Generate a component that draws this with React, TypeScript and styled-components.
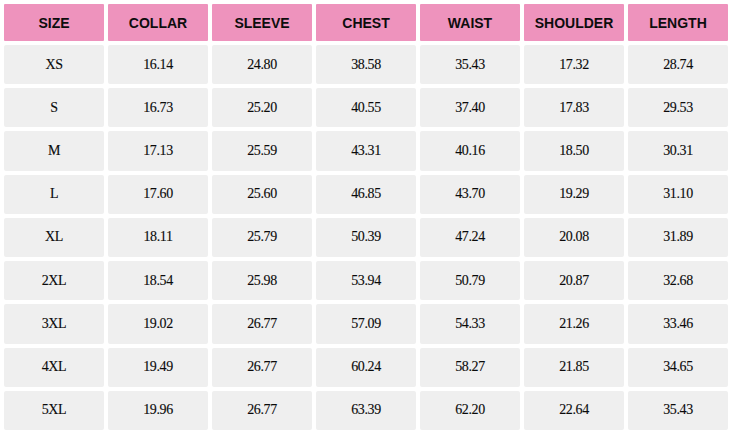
import styled, { createGlobalStyle } from "styled-components";

const GlobalStyle = createGlobalStyle`
  html, body {
    margin: 0;
    padding: 0;
    background: #ffffff;
  }
`;

const Page = styled.div`
  width: 737px;
  height: 441px;
  padding: 4px 0 0 4px;
  box-sizing: border-box;
  background: #ffffff;
`;

const Table = styled.div`
  display: grid;
  grid-template-columns: repeat(7, 100px);
  grid-template-rows: 37px repeat(9, 1fr);
  gap: 4px;
  width: 724px;
  height: 426px;
`;

const HeadCell = styled.div`
  display: flex;
  align-items: center;
  justify-content: center;
  background-color: #ee93bd;
  color: #0d0d0d;
  font-family: "Liberation Sans", Arial, sans-serif;
  font-weight: 700;
  font-size: 14px;
  border-radius: 1px;
`;

const Cell = styled.div`
  display: flex;
  align-items: center;
  justify-content: center;
  background-color: #efefef;
  color: #0a0a0a;
  font-family: "Liberation Serif", "Times New Roman", serif;
  font-size: 14px;
  letter-spacing: -0.4px;
  -webkit-text-stroke: 0.12px #0a0a0a;
  border-radius: 2px;
`;

const headers = ["SIZE", "COLLAR", "SLEEVE", "CHEST", "WAIST", "SHOULDER", "LENGTH"];

const rows: string[][] = [
  ["XS", "16.14", "24.80", "38.58", "35.43", "17.32", "28.74"],
  ["S", "16.73", "25.20", "40.55", "37.40", "17.83", "29.53"],
  ["M", "17.13", "25.59", "43.31", "40.16", "18.50", "30.31"],
  ["L", "17.60", "25.60", "46.85", "43.70", "19.29", "31.10"],
  ["XL", "18.11", "25.79", "50.39", "47.24", "20.08", "31.89"],
  ["2XL", "18.54", "25.98", "53.94", "50.79", "20.87", "32.68"],
  ["3XL", "19.02", "26.77", "57.09", "54.33", "21.26", "33.46"],
  ["4XL", "19.49", "26.77", "60.24", "58.27", "21.85", "34.65"],
  ["5XL", "19.96", "26.77", "63.39", "62.20", "22.64", "35.43"],
];

function App() {
  return (
    <>
      <GlobalStyle />
      <Page>
        <Table>
          {headers.map((h) => (
            <HeadCell key={h}>{h}</HeadCell>
          ))}
          {rows.map((row) =>
            row.map((value, i) => <Cell key={row[0] + i}>{value}</Cell>)
          )}
        </Table>
      </Page>
    </>
  );
}

export default App;
